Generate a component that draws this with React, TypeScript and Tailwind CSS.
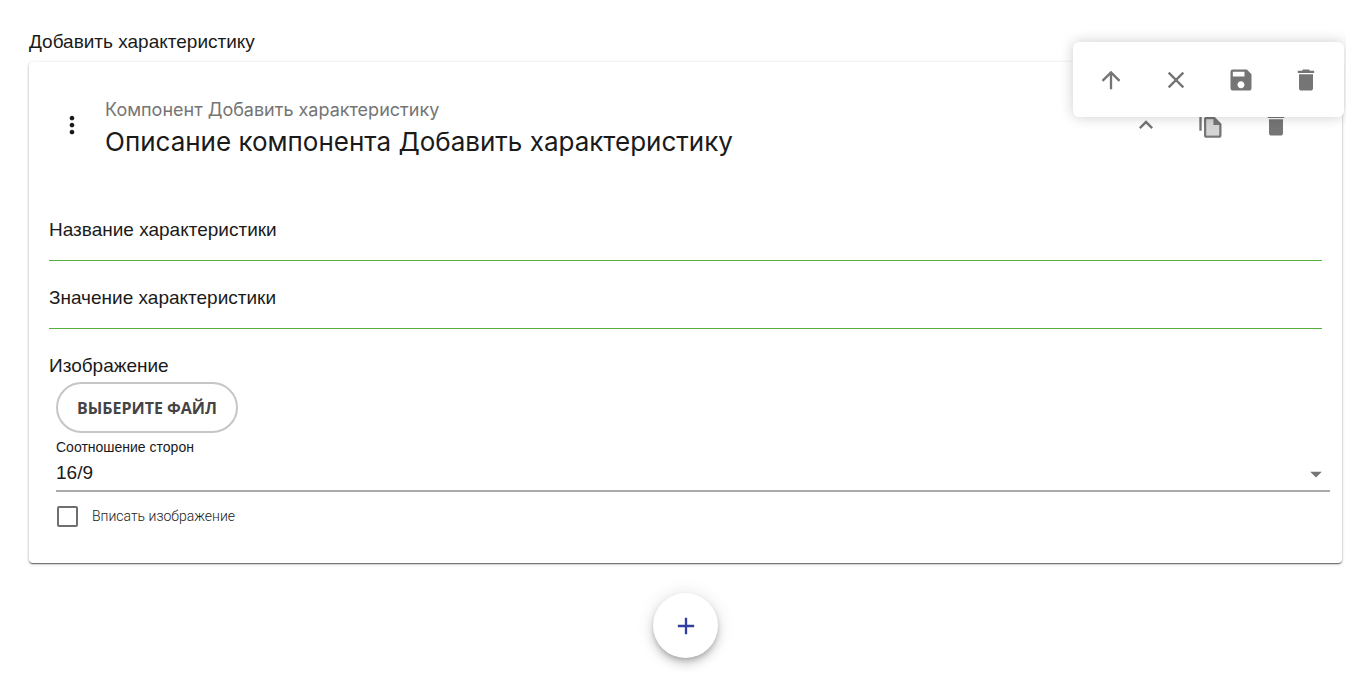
import { useState } from "react";
import { MdAdd, MdArrowDropDown, MdArrowUpward, MdClear, MdDelete, MdExpandLess, MdMoreVert, MdSave } from "react-icons/md";

const toolbarActions = [
  { label: "Переместить вверх", Icon: MdArrowUpward },
  { label: "Отменить", Icon: MdClear },
  { label: "Сохранить", Icon: MdSave },
  { label: "Удалить характеристику", Icon: MdDelete },
];

function CopyIcon() {
  return (
    <svg viewBox="0 0 24 24" className="w-7 h-7" fill="currentColor" aria-hidden="true">
      <path opacity=".3" d="M14 7H8v14h11v-9h-5z" />
      <path d="M16 1H4c-1.1 0-2 .9-2 2v14h2V3h12V1z" />
      <path d="M15 5H8c-1.1 0-1.99.9-1.99 2L6 21c0 1.1.89 2 1.99 2H19c1.1 0 2-.9 2-2V11l-6-6zm4 16H8V7h6v5h5v9z" />
    </svg>
  );
}

function TextField({ id, label }: { id: string; label: string }) {
  const [value, setValue] = useState("");

  return (
    <div className="flex flex-col">
      <label htmlFor={id} className="leading-7">{label}</label>
      <input
        id={id}
        type="text"
        value={value}
        onChange={(e) => setValue(e.target.value)}
        className="w-full h-[17px] border-b border-[#58b03c] focus:outline-none"
      />
    </div>
  );
}

export default function App() {
  const [ratio, setRatio] = useState("16/9");
  const [fit, setFit] = useState(false);

  return (
    <div className="relative min-h-screen bg-white pl-[29px] pr-1 pt-7 pb-3 text-[19px] text-[#1a1a1a] font-['Liberation_Sans',Arial,sans-serif]">
      <h1 className="leading-7 mb-1.5">Добавить характеристику</h1>

      <section className="rounded bg-white px-5 pt-[31px] pb-9 shadow-[0_2px_1px_-1px_rgba(0,0,0,0.3),0_1px_1px_0_rgba(0,0,0,0.24),0_1px_3px_0_rgba(0,0,0,0.3)]">
        <header className="flex items-center h-16 pr-3.5">
          <button type="button" aria-label="Меню" className="w-[46px] h-[46px] mr-2.5 flex items-center justify-center">
            <MdMoreVert size={28} />
          </button>

          <div className="flex-1 pt-1.5 font-['Inter',sans-serif]">
            <p className="text-[18px] leading-7 text-[#757575]">Компонент Добавить характеристику</p>
            <h2 className="text-[26px] leading-9">Описание компонента Добавить характеристику</h2>
          </div>

          <div className="flex text-[#757575]">
            <button type="button" aria-label="Свернуть" className="w-[65px] h-[65px] flex items-center justify-center">
              <MdExpandLess size={28} />
            </button>
            <button type="button" aria-label="Копировать" className="w-[65px] h-[65px] flex items-center justify-center">
              <CopyIcon />
            </button>
            <button type="button" aria-label="Удалить компонент" className="w-[65px] h-[65px] flex items-center justify-center">
              <MdDelete size={28} />
            </button>
          </div>
        </header>

        <div className="mt-[59px] flex flex-col gap-[23px]">
          <TextField id="name" label="Название характеристики" />
          <TextField id="value" label="Значение характеристики" />

          <div>
            <p className="leading-7">Изображение</p>

            <div className="ml-[7px] -mr-2 mt-0.5">
              <button type="button" className="h-[51px] px-[19px] rounded-full border-2 border-[#c6c6c6] text-[#444] text-[16px] leading-5 font-bold font-['Open_Sans',sans-serif]">
                ВЫБЕРИТЕ ФАЙЛ
              </button>

              <label htmlFor="ratio" className="block mt-1 text-[14px] leading-5">Соотношение сторон</label>
              <div className="grid items-center border-b-2 border-[#a9a9a9]">
                <select
                  id="ratio"
                  value={ratio}
                  onChange={(e) => setRatio(e.target.value)}
                  className="col-start-1 row-start-1 w-full h-[33px] appearance-none bg-transparent focus:outline-none"
                >
                  <option>16/9</option>
                  <option>4/3</option>
                  <option>1/1</option>
                </select>
                <MdArrowDropDown size={28} className="col-start-1 row-start-1 justify-self-end text-[#757575] pointer-events-none" />
              </div>

              <label className="flex items-center w-fit mt-3.5 ml-px gap-3.5 text-[14px] leading-[21px] font-light font-['Roboto',sans-serif]">
                <input
                  type="checkbox"
                  checked={fit}
                  onChange={(e) => setFit(e.target.checked)}
                  className="w-[21px] h-[21px] appearance-none rounded-xs border-2 border-[#6f6f6f] checked:bg-[#3f51b5]"
                />
                Вписать изображение
              </label>
            </div>
          </div>
        </div>
      </section>

      <div className="flex justify-center mt-[30px]">
        <button
          type="button"
          aria-label="Добавить"
          className="w-[65px] h-[65px] rounded-full bg-white text-[#303f9f] flex items-center justify-center shadow-[0_3px_5px_-1px_rgba(0,0,0,0.2),0_6px_10px_0_rgba(0,0,0,0.14),0_1px_18px_0_rgba(0,0,0,0.12)]"
        >
          <MdAdd size={28} />
        </button>
      </div>

      {/* floating toolbar over the card header */}
      <div className="absolute top-[42px] right-0.5 flex py-[5px] pl-[5px] pr-1.5 rounded-md bg-white text-[#757575] shadow-[0_0_14px_rgba(0,0,0,0.2)]">
        {toolbarActions.map(({ label, Icon }) => (
          <button key={label} type="button" aria-label={label} className="w-[65px] h-[65px] flex items-center justify-center">
            <Icon size={28} />
          </button>
        ))}
      </div>
    </div>
  );
}
